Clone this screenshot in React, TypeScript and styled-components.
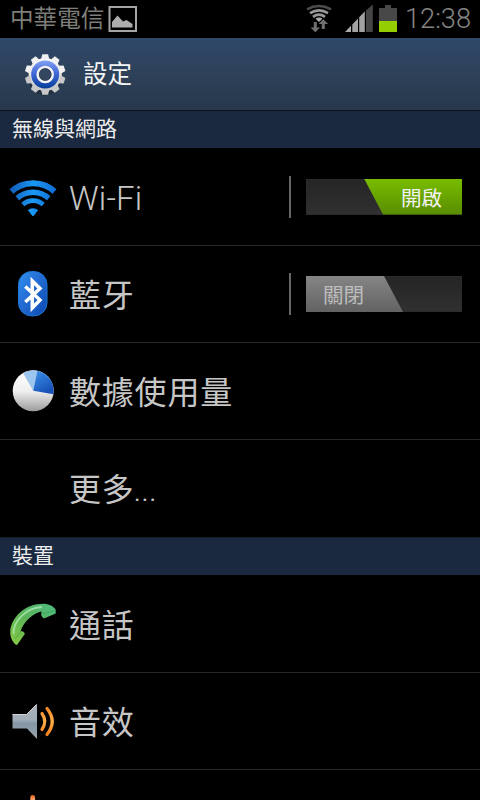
import React from 'react';
import styled, { createGlobalStyle } from 'styled-components';

const GlobalStyle = createGlobalStyle`
  * { box-sizing: border-box; }
  html, body { margin: 0; background: #000; }
  body { overflow: hidden; font-family: Roboto, "Noto Sans CJK TC", sans-serif; }
  svg { display: block; flex: none; }
`;

const Screen = styled.div`
  width: 480px;
  height: 800px;
  overflow: hidden;
  background: #000;
  display: flex;
  flex-direction: column;
`;

const StatusBar = styled.header`
  flex: none;
  height: 38px;
  display: flex;
  align-items: flex-start;
  padding-left: 10px;
  color: #7d7e79;
`;

const Carrier = styled.span`
  width: 98px;
  font-size: 23.6px;
  line-height: 38px;
  font-weight: 400;
  white-space: nowrap;
`;

const StatusIcons = styled.div`
  margin-left: auto;
  display: flex;
`;

const Clock = styled.span`
  width: 78px;
  padding-left: 3px;
  font-size: 27.2px;
  line-height: 38px;
  font-weight: 300;
  color: #858585;
  white-space: nowrap;
`;

const TitleBar = styled.div`
  flex: none;
  height: 73px;
  display: flex;
  padding-left: 20px;
  background: linear-gradient(#30486a, #2d4159 50%, #27384b);
  border-bottom: 1px solid #0b121d;
`;

const Title = styled.h1`
  margin: 0 0 0 13px;
  font-size: 24.5px;
  line-height: 73px;
  font-weight: 400;
  color: #f4f4f4;
`;

const SectionHeader = styled.h2<{ $divided?: boolean }>`
  flex: none;
  margin: 0;
  height: ${p => (p.$divided ? 38 : 37)}px;
  padding-left: 12px;
  border-top: ${p => (p.$divided ? '1px solid #111c29' : 'none')};
  background: #1a293f;
  color: #ececec;
  font-size: 21px;
  line-height: 37px;
  font-weight: 400;
`;

const Row = styled.div<{ $last?: boolean }>`
  flex: none;
  height: 98px;
  margin-bottom: ${p => (p.$last ? 0 : -1)}px;
  border-bottom: 1px solid ${p => (p.$last ? 'transparent' : '#272727')};
  display: flex;
  align-items: center;
  padding: 0 18px 0 6px;
  & + & { padding-top: 1px; }
`;

const IconSlot = styled.div`
  width: 54px;
  height: 54px;
  flex: none;
`;

const Label = styled.span<{ $latin?: boolean }>`
  flex: 1;
  padding: 4px 0 0 9px;
  font-size: ${p => (p.$latin ? 33 : 32)}px;
  letter-spacing: ${p => (p.$latin ? 0.2 : 0.8)}px;
  line-height: 48px;
  font-weight: ${p => (p.$latin ? 300 : 400)};
  color: #c6c6c6;
  white-space: nowrap;
`;

const Dots = styled.span`
  font-weight: 300;
  margin-left: -1px;
  letter-spacing: 0;
`;

const Divider = styled.div`
  width: 2px;
  height: 42px;
  margin-right: 15px;
  background: #666;
`;

const Track = styled.div<{ $on: boolean }>`
  width: 156px;
  height: 36px;
  display: flex;
  justify-content: ${p => (p.$on ? 'flex-end' : 'flex-start')};
  background: linear-gradient(#252525, #303030);
  box-shadow: inset 0 0 0 1px #2b2b2b;
`;

const Thumb = styled.div<{ $on: boolean }>`
  width: ${p => (p.$on ? 98 : 97)}px;
  height: 36px;
  padding-left: ${p => (p.$on ? 37 : 17)}px;
  font-size: 20.6px;
  line-height: 41px;
  font-weight: 400;
  color: ${p => (p.$on ? '#f2f2f2' : '#bdbdbd')};
  background: ${p => (p.$on ? 'linear-gradient(#78bd00, #588c00)' : 'linear-gradient(#858585, #626262)')};
  clip-path: ${p => (p.$on
    ? 'polygon(0 0, 100% 0, 100% 100%, 19px 100%)'
    : 'polygon(0 0, 78px 0, 100% 100%, 0 100%)')};
`;

const Toggle = ({ on }: { on: boolean }) => (
  <>
    <Divider />
    <Track $on={on}>
      <Thumb $on={on}>{on ? '開啟' : '關閉'}</Thumb>
    </Track>
  </>
);

const PictureIcon = () => (
  <svg width="30" height="38" viewBox="108 0 30 38">
    <rect x="109.5" y="7" width="26.5" height="24" fill="none" stroke="#a5a5a5" strokeWidth="2" />
    <path d="M112 27.5V22l5.5-6.5 5.5 6 3.5-1.5 6 4v3.5z" fill="#adadad" />
  </svg>
);

const SignalIcons = () => (
  <svg width="100" height="38" viewBox="302 0 100 38">
    <g fill="none" strokeWidth="2.6">
      <path d="M307 9.300Q319 2.700 331 9.300" stroke="#4c4c4c" />
      <path d="M310 13.200Q319 7.500 328 13.200" stroke="#999" />
      <path d="M313 16.900Q319 12.500 325 16.900" stroke="#999" />
    </g>
    <path d="M315.500 18.700q3.500-2.600 7 0l-3.500 3.200z" fill="#aaa" />
    <path d="M313.800 22h3v5.500h3.200l-4.700 4.800-4.700-4.800h3.200zM321.800 29v-5h-3.200l4.700-4.800 4.700 4.800h-3.200V29z" fill="#707070" />
    <path d="M345 32l6-6.200V32z" fill="#aaa" />
    <path d="M352.300 24.500l5.700-6V32h-5.700zM359.200 17.300l5.600-6V32h-5.600z" fill="#a2a2a2" />
    <path d="M366 10.600l6.800-6V32H366z" fill="#464646" />
    <path d="M379 8h6V5h6v3h6v13h-18z" fill="#484848" />
    <rect x="379" y="21" width="18" height="11" fill="#95ce00" />
  </svg>
);

const teeth = [0, 36, 72, 108, 144, 180, 216, 252, 288, 324];

const GearIcon = () => (
  <svg width="50" height="72" viewBox="20 38 50 72">
    <defs>
      <linearGradient id="gearMetal" gradientUnits="userSpaceOnUse" x1="0" y1="54" x2="0" y2="95">
        <stop offset="0" stopColor="#fff" />
        <stop offset=".5" stopColor="#e4e4e4" />
        <stop offset="1" stopColor="#bcbcbc" />
      </linearGradient>
      <linearGradient id="gearBlue" x1="0" y1="0" x2="0" y2="1">
        <stop offset="0" stopColor="#82a0f2" />
        <stop offset=".45" stopColor="#4169d8" />
        <stop offset="1" stopColor="#063d98" />
      </linearGradient>
    </defs>
    <ellipse cx="45" cy="77" rx="17" ry="18.500" fill="#17212e" opacity=".5" />
    <circle cx="45.200" cy="74.500" r="16.600" fill="url(#gearMetal)" />
    {teeth.map(a => (
      <path key={a} d="M41 59.500l1.300-5.300h5.800l1.300 5.300z" fill={a > 100 && a < 260 ? '#c8c8c8' : '#f1f1f1'} transform={`rotate(${a} 45.200 74.500)`} />
    ))}
    <circle cx="45.200" cy="74.500" r="14" fill="url(#gearBlue)" />
    <circle cx="45.200" cy="74.500" r="7.500" fill="#344760" stroke="#f2f2f2" strokeWidth="2.600" />
    <circle cx="45.200" cy="74.500" r="5.900" fill="none" stroke="#222e40" strokeWidth=".6" />
  </svg>
);

const WifiIcon = () => (
  <svg width="54" height="54" viewBox="6 170 54 54">
    <defs>
      <linearGradient id="wifiBlue" gradientUnits="userSpaceOnUse" x1="12" y1="192" x2="54" y2="196">
        <stop offset="0" stopColor="#1262bd" />
        <stop offset=".5" stopColor="#1a98f5" />
        <stop offset="1" stopColor="#116fd5" />
      </linearGradient>
      <clipPath id="wifiFan"><path d="M7.500 187L33 216.300 58.500 187V170H7.500z" /></clipPath>
    </defs>
    <g fill="none" stroke="url(#wifiBlue)" clipPath="url(#wifiFan)">
      <circle cx="33" cy="216" r="32.700" strokeWidth="6" />
      <circle cx="33" cy="216" r="23.700" strokeWidth="5.400" />
      <circle cx="33" cy="216" r="15.400" strokeWidth="4.600" />
      <circle cx="33" cy="216" r="4" fill="#1a98f5" strokeWidth="7.600" />
    </g>
  </svg>
);

const BluetoothIcon = () => (
  <svg width="54" height="54" viewBox="6 267 54 54">
    <defs>
      <linearGradient id="btBlue" x1="0" y1="0" x2="1" y2="1">
        <stop offset="0" stopColor="#3192f0" />
        <stop offset=".4" stopColor="#256fd6" />
        <stop offset="1" stopColor="#0b48af" />
      </linearGradient>
    </defs>
    <rect x="18.500" y="271.500" width="28.500" height="44.400" rx="13" fill="url(#btBlue)" stroke="#1b78d5" />
    <path d="M25.300 286.500l14.700 13.500-7.700 8V281l7.700 7.500-14.700 13.500" fill="none" stroke="#fff" strokeWidth="3.500" />
  </svg>
);

const DataIcon = () => (
  <svg width="54" height="54" viewBox="6 364 54 54">
    <defs>
      <linearGradient id="pieWhite" x1="0" y1="0" x2="0" y2="1">
        <stop offset="0" stopColor="#fff" />
        <stop offset=".5" stopColor="#f0f0f0" />
        <stop offset="1" stopColor="#9c9c9c" />
      </linearGradient>
      <linearGradient id="pieBlue" x1="0" y1="0" x2=".5" y2="1">
        <stop offset="0" stopColor="#3b91e9" />
        <stop offset="1" stopColor="#1852b8" />
      </linearGradient>
    </defs>
    <circle cx="33.200" cy="390.800" r="20.500" fill="url(#pieWhite)" />
    <path d="M33.200 390.800L23 373a20.500 20.500 0 0 1 14.500-2.300z" fill="#9dc6ee" />
    <path d="M33.200 390.800l4.200-20.100a20.500 20.500 0 0 1 16 23.500z" fill="url(#pieBlue)" />
  </svg>
);

const PhoneIcon = () => (
  <svg width="54" height="54" viewBox="6 597 54 54">
    <defs>
      <linearGradient id="phoneGreen" gradientUnits="userSpaceOnUse" x1="50" y1="604" x2="15" y2="645">
        <stop offset="0" stopColor="#4fbb7c" />
        <stop offset=".5" stopColor="#5cb457" />
        <stop offset="1" stopColor="#83c947" />
      </linearGradient>
    </defs>
    <path d="M15.500 644.500C12 641 10 637 10.300 631C11 620 21 607 37 604.300C45 603 51 604 55.700 609.500V613.500L44 618.500C41.500 617 40.500 614.500 41.500 611.500C34 612.500 23 622 20.500 631.500C22.500 630.500 24.500 632 24.800 634L17 645Z" fill="url(#phoneGreen)" />
    <path d="M13.500 634C13 621 26.500 607.500 42 607" fill="none" stroke="#b6eec0" strokeWidth="1.800" opacity=".7" />
    <path d="M42 612.500c3 2.200 8-.2 13-2.500M20.500 632l-5.500 7" fill="none" stroke="#328743" strokeWidth="1.200" opacity=".35" />
  </svg>
);

const SoundIcon = () => (
  <svg width="54" height="54" viewBox="6 694 54 54">
    <defs>
      <linearGradient id="speaker" x1="0" y1="0" x2="0" y2="1">
        <stop offset="0" stopColor="#aeb3b7" />
        <stop offset=".45" stopColor="#a1adb8" />
        <stop offset=".55" stopColor="#8496a6" />
        <stop offset="1" stopColor="#9ba5ae" />
      </linearGradient>
      <linearGradient id="waves" gradientUnits="userSpaceOnUse" x1="0" y1="706" x2="0" y2="736">
        <stop offset="0" stopColor="#f58220" />
        <stop offset=".5" stopColor="#ffb04a" />
        <stop offset="1" stopColor="#f27b15" />
      </linearGradient>
    </defs>
    <path d="M12.500 714h14.500L37 704v35L27 728.500H12.500z" fill="url(#speaker)" />
    <path d="M12.500 714.500h14L36.500 704.500" fill="none" stroke="#d0d3d5" strokeWidth="1" />
    <g fill="none" stroke="url(#waves)" strokeWidth="3.200" strokeLinecap="round">
      <path d="M42 713.500q5.500 8 0 16" />
      <path d="M47 708.500q10.500 13 0 26" />
    </g>
  </svg>
);

const BrightnessIcon = () => (
  <svg width="54" height="54" viewBox="6 791 54 54">
    <defs>
      <linearGradient id="sun" x1="0" y1="0" x2="0" y2="1">
        <stop offset="0" stopColor="#e85c13" />
        <stop offset=".5" stopColor="#ffb98a" />
      </linearGradient>
    </defs>
    <rect x="30.300" y="795" width="4.800" height="12" rx="2.400" fill="url(#sun)" />
    <circle cx="32.700" cy="818" r="10" fill="#f58220" />
  </svg>
);

const App = () => (
  <>
    <GlobalStyle />
    <Screen>
      <StatusBar>
        <Carrier>中華電信</Carrier>
        <PictureIcon />
        <StatusIcons><SignalIcons /></StatusIcons>
        <Clock>12:38</Clock>
      </StatusBar>
      <TitleBar>
        <GearIcon />
        <Title>設定</Title>
      </TitleBar>
      <SectionHeader>無線與網路</SectionHeader>
      <Row><IconSlot><WifiIcon /></IconSlot><Label $latin>Wi-Fi</Label><Toggle on /></Row>
      <Row><IconSlot><BluetoothIcon /></IconSlot><Label>藍牙</Label><Toggle on={false} /></Row>
      <Row><IconSlot><DataIcon /></IconSlot><Label>數據使用量</Label></Row>
      <Row $last><IconSlot /><Label>更多<Dots>...</Dots></Label></Row>
      <SectionHeader $divided>裝置</SectionHeader>
      <Row><IconSlot><PhoneIcon /></IconSlot><Label>通話</Label></Row>
      <Row><IconSlot><SoundIcon /></IconSlot><Label>音效</Label></Row>
      <Row><IconSlot><BrightnessIcon /></IconSlot><Label /></Row>
    </Screen>
  </>
);

export default App;
